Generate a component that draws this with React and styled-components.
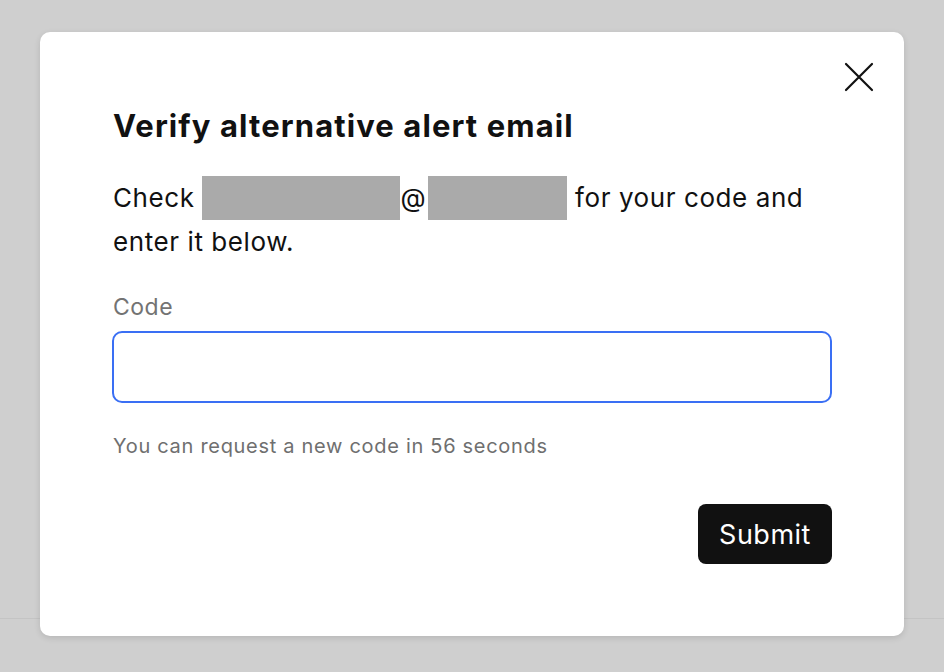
import React from "react";
import styled, { createGlobalStyle } from "styled-components";

const GlobalStyle = createGlobalStyle`
  html, body {
    margin: 0;
    padding: 0;
    background: #cfcfcf;
  }
  body {
    font-family: Inter, "Noto Sans", "Liberation Sans", sans-serif;
    -webkit-font-smoothing: antialiased;
  }
`;

export default function App() {
  return (
    <>
      <GlobalStyle />
      <Backdrop>
        <BackLine />
        <Modal role="dialog" aria-labelledby="verify-title">
          <CloseButton aria-label="Close">
            <svg width="30" height="30" viewBox="0 0 30 30" fill="none">
              <path d="M2 2L28 28M28 2L2 28" stroke="#111" strokeWidth="2.2" strokeLinecap="round" />
            </svg>
          </CloseButton>
          <Title id="verify-title">Verify alternative alert email</Title>
          <Message>
            Check <Redacted $width={198} />@<Redacted $width={139} $gap={2} /> for your code and
            <br />
            enter it below.
          </Message>
          <Field>
            <Label htmlFor="code">Code</Label>
            <Input id="code" type="text" />
            <Hint>You can request a new code in 56 seconds</Hint>
          </Field>
          <Actions>
            <SubmitButton type="button">Submit</SubmitButton>
          </Actions>
        </Modal>
      </Backdrop>
    </>
  );
}

const Backdrop = styled.div`
  position: relative;
  width: 944px;
  height: 672px;
  padding: 32px 40px 0;
  box-sizing: border-box;
  background: #cfcfcf;
  overflow: hidden;
`;
const BackLine = styled.div`
  position: absolute;
  left: 0;
  right: 0;
  top: 618px;
  height: 1px;
  background: #c4c4c4;
`;
const Modal = styled.div`
  position: relative;
  width: 864px;
  height: 604px;
  box-sizing: border-box;
  padding: 76px 72px 0 72px;
  background: #fff;
  border-radius: 10px;
  box-shadow: 0 2px 6px rgba(0, 0, 0, 0.12);
`;
const CloseButton = styled.button`
  position: absolute;
  top: 30px;
  right: 30px;
  width: 30px;
  height: 30px;
  padding: 0;
  border: 0;
  background: none;
  cursor: pointer;
`;
const Title = styled.h2`
  margin: 0 0 0 1px;
  font-size: 31px;
  line-height: 36px;
  font-weight: 700;
  color: #111;
  letter-spacing: 1.1px;
`;
const Message = styled.p`
  margin: 32px 0 0 1px;
  font-size: 26px;
  line-height: 44px;
  letter-spacing: 0.58px;
  color: #111;
`;
const Redacted = styled.span`
  display: inline-block;
  width: ${(p) => p.$width}px;
  height: 44px;
  margin-left: ${(p) => p.$gap || 0}px;
  vertical-align: top;
  background: #aaaaaa;
`;
const Field = styled.div`
  display: flex;
  flex-direction: column;
  margin-top: 29px;
`;
const Label = styled.label`
  margin-left: 1px;
  font-size: 23px;
  line-height: 28px;
  letter-spacing: 0.5px;
  color: #737373;
`;
const Input = styled.input`
  margin-top: 10px;
  width: 720px;
  height: 72px;
  box-sizing: border-box;
  border: 2.5px solid #3a6ff4;
  border-radius: 10px;
  padding: 0 18px;
  font-size: 24px;
  outline: none;
`;
const Hint = styled.div`
  margin: 30px 0 0 1px;
  font-size: 20px;
  line-height: 26px;
  letter-spacing: 0.7px;
  color: #6f6f6f;
`;
const Actions = styled.div`
  display: flex;
  justify-content: flex-end;
  width: 720px;
  margin-top: 45px;
`;
const SubmitButton = styled.button`
  width: 134px;
  height: 60px;
  border: 0;
  border-radius: 8px;
  background: #111;
  color: #fff;
  font-family: inherit;
  font-size: 27px;
  letter-spacing: 0.5px;
  cursor: pointer;
`;
